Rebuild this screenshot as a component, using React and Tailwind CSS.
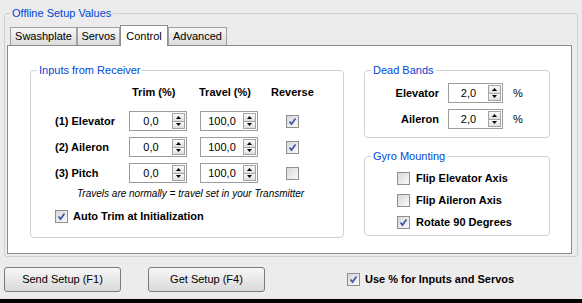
import React from "react";

const Arrow = ({ up }) => (
  <svg width="5" height="3" viewBox="0 0 5 3">
    <polygon points={up ? "2.5,0 5,3 0,3" : "0,0 5,0 2.5,3"} fill="#000" />
  </svg>
);

const Spin = ({ value }) => (
  <div className="flex h-[20px] border border-[#9c9c9c] bg-white">
    <div className="flex-1 text-center text-[11px] leading-[18px]">{value}</div>
    <div className="flex flex-col w-[13px] my-[1px] mr-[1px] border border-[#a4a4a4]">
      <div className="flex-1 flex items-center justify-center border-b border-[#a4a4a4] bg-gradient-to-b from-[#fcfcfc] to-[#dedede]">
        <Arrow up />
      </div>
      <div className="flex-1 flex items-center justify-center bg-gradient-to-b from-[#fcfcfc] to-[#dedede]">
        <Arrow />
      </div>
    </div>
  </div>
);

const Check = ({ checked }) => (
  <span className="w-[13px] h-[13px] shrink-0 border border-[#8f8f8f] bg-gradient-to-br from-[#d8d8d8] to-[#fafafa] flex items-center justify-center">
    {checked && (
      <svg width="9" height="9" viewBox="0 0 9 9">
        <path d="M1.5 4.5 L3.5 7 L7.5 1.5" stroke="#3d56a6" strokeWidth="1.7" fill="none" />
      </svg>
    )}
  </span>
);

const Group = ({ title, className, children }) => (
  <fieldset className={"border border-[#d0d0d0] rounded-[4px] p-0 " + className}>
    <legend className="ml-[6px] px-[2px] text-[11px] leading-[14px] text-[#0046d5]">{title}</legend>
    {children}
  </fieldset>
);

const rows = [
  { label: "(1) Elevator", rev: true },
  { label: "(2) Aileron", rev: true },
  { label: "(3) Pitch", rev: false },
];

const tabs = ["Swashplate", "Servos", "Control", "Advanced"];
const tabWidths = ["w-[67px]", "w-[43px]", "w-[48px]", "w-[59px]"];

export default function App() {
  return (
    <div className="w-[582px] h-[303px] bg-[#ececec] flex flex-col overflow-hidden text-black font-['Liberation_Sans',Arial,sans-serif]">
      <fieldset className="mx-[4px] mt-[6px] h-[251px] border border-[#d0d0d0] rounded-[3px] p-0">
        <legend className="ml-[5px] px-[2px] text-[11px] leading-[14px] text-[#0046d5]">Offline Setup Values</legend>
        <div className="pl-[2px] pr-[5px]">
          {/* tab strip */}
          <div className="mt-[5px] h-[20px] flex items-end pl-[3px]">
            {tabs.map((t, i) =>
              t === "Control" ? (
                <div key={t} className={"relative z-10 h-[21px] -mb-px bg-white border border-b-0 border-[#8c8c8c] text-center text-[11px] leading-[20px] " + tabWidths[i]}>
                  {t}
                </div>
              ) : (
                <div key={t} className={"h-[18px] border border-b-0 border-[#a0a0a0] bg-gradient-to-b from-[#f7f7f7] to-[#dcdcdc] text-center text-[11px] leading-[17px] " + tabWidths[i]}>
                  {t}
                </div>
              )
            )}
          </div>

          {/* tab panel */}
          <div className="h-[209px] border border-[#8c8c8c] bg-white flex pl-[22px] pt-[17px]">
            <Group title="Inputs from Receiver" className="w-[314px] h-[175px]">
              <div className="pl-[24px] pt-[8px]">
                <div className="grid grid-cols-[61px_58px_58px_46px] gap-x-[13px] text-[11px] font-bold leading-[14px] mb-[12px]">
                  <span />
                  <span className="pl-[3px]">Trim (%)</span>
                  <span className="-ml-[1px]">Travel (%)</span>
                  <span>Reverse</span>
                </div>
                <div className="flex flex-col gap-[6px]">
                  {rows.map((r) => (
                    <div key={r.label} className="grid grid-cols-[61px_58px_58px_46px] gap-x-[13px] items-center">
                      <span className="text-[11px] font-bold leading-[20px] whitespace-nowrap">{r.label}</span>
                      <Spin value="0,0" />
                      <Spin value="100,0" />
                      <span className="pl-[15px]">
                        <Check checked={r.rev} />
                      </span>
                    </div>
                  ))}
                </div>
                <p className="ml-[22px] mt-[5px] text-[10px] italic leading-[12px] whitespace-nowrap">
                  Travels are normally = travel set in your Transmitter
                </p>
                <div className="mt-[10px] flex items-center gap-[5px]">
                  <Check checked />
                  <span className="text-[11px] font-bold leading-[13px]">Auto Trim at Initialization</span>
                </div>
              </div>
            </Group>

            <div className="ml-[20px] flex flex-col gap-[11px]">
              <Group title="Dead Bands" className="w-[186px] h-[75px]">
                <div className="pt-[6px] flex flex-col gap-[6px]">
                  {["Elevator", "Aileron"].map((l) => (
                    <div key={l} className="grid grid-cols-[74px_55px_auto] gap-x-[9px] items-center">
                      <span className="text-right text-[11px] font-bold">{l}</span>
                      <Spin value="2,0" />
                      <span className="ml-[1px] text-[11px]">%</span>
                    </div>
                  ))}
                </div>
              </Group>
              <Group title="Gyro Mounting" className="w-[186px] h-[87px]">
                <div className="pt-[9px] pl-[32px] flex flex-col gap-[9px]">
                  {[
                    ["Flip Elevator Axis", false],
                    ["Flip Aileron Axis", false],
                    ["Rotate 90 Degrees", true],
                  ].map(([l, c]) => (
                    <div key={l} className="flex items-center gap-[6px] h-[13px]">
                      <Check checked={c} />
                      <span className="text-[11px] font-bold leading-[13px] whitespace-nowrap">{l}</span>
                    </div>
                  ))}
                </div>
              </Group>
            </div>
          </div>
        </div>
      </fieldset>

      {/* bottom buttons */}
      <div className="mt-[10px] h-[25px] px-[4px] flex items-center">
        <button className="w-[117px] h-[25px] border border-[#7a7a7a] rounded-[3px] bg-gradient-to-b from-[#f7f7f7] to-[#dadada] text-[11px]">
          Send Setup (F1)
        </button>
        <button className="ml-[27px] w-[117px] h-[25px] border border-[#7a7a7a] rounded-[3px] bg-gradient-to-b from-[#f7f7f7] to-[#dadada] text-[11px]">
          Get Setup (F4)
        </button>
        <div className="ml-[82px] flex items-center gap-[5px]">
          <Check checked />
          <span className="text-[11px] font-bold whitespace-nowrap">Use % for Inputs and Servos</span>
        </div>
      </div>
      <div className="mt-auto h-[4px] bg-black" />
    </div>
  );
}
